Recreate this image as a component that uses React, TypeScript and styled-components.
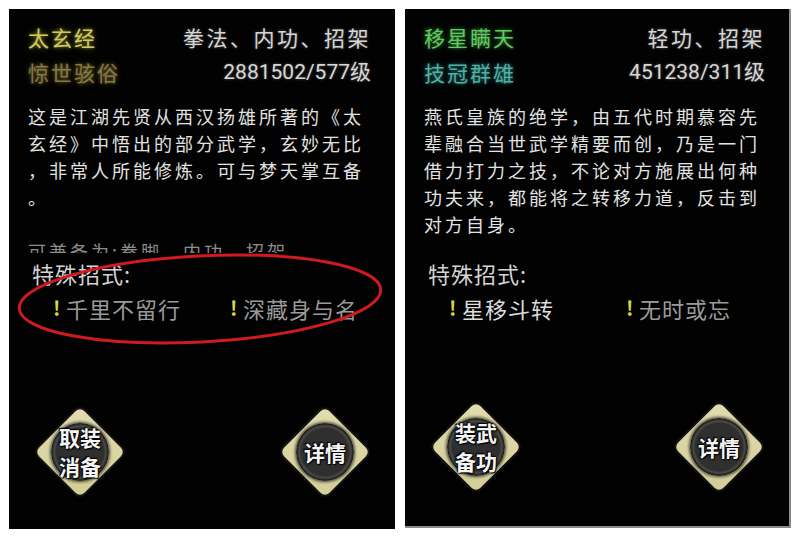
import React from "react";
import styled, { createGlobalStyle } from "styled-components";

const Global = createGlobalStyle`
  html, body { margin: 0; padding: 0; background: #ffffff; }
  body { font-family: "Noto Sans CJK SC", "Noto Sans", sans-serif; }
`;

const Page = styled.div`
  display: flex;
  gap: 10px;
  padding: 9px 0 0 9px;
  width: 800px;
  height: 538px;
  box-sizing: border-box;
`;

const Panel = styled.section<{ $framed?: boolean }>`
  position: relative;
  width: 386px;
  height: ${(p) => (p.$framed ? 519 : 520)}px;
  box-sizing: border-box;
  background: #020202;
  display: flex;
  flex-direction: column;
  padding: 13px 0 0 0;
  border-right: ${(p) => (p.$framed ? "2px solid #8a8a8a" : "none")};
  border-bottom: ${(p) => (p.$framed ? "2px solid #8a8a8a" : "none")};
  overflow: hidden;
`;

const Header = styled.div`
  display: grid;
  grid-template-columns: auto 1fr;
  row-gap: 5px;
  padding: 0 24px 0 19px;
  line-height: 30px;
`;

const Name = styled.div<{ $color: string; $glow: string }>`
  font-size: 21px;
  letter-spacing: 2px;
  color: ${(p) => p.$color};
  text-shadow: 0 0 3px ${(p) => p.$glow}, 0 0 6px ${(p) => p.$glow};
`;

const Meta = styled.div<{ $digits?: boolean }>`
  justify-self: end;
  font-family: ${(p) =>
    p.$digits ? `Roboto, "Noto Sans CJK SC", sans-serif` : `"Noto Sans CJK SC", sans-serif`};
  font-size: 21px;
  letter-spacing: ${(p) => (p.$digits ? 0 : 2.5)}px;
  color: #d6d6d6;
  text-shadow: 0 0 3px rgba(255, 255, 255, 0.35);
`;

const Description = styled.div`
  margin-top: 16px;
  height: 150px;
  overflow: hidden;
  padding-left: 19px;
`;

const Line = styled.div<{ $dim?: boolean }>`
  height: 27px;
  line-height: 27px;
  font-size: 18px;
  letter-spacing: 3px;
  white-space: nowrap;
  color: ${(p) => (p.$dim ? "#8c8c8c" : "#e2e2e2")};
`;

const SpecialTitle = styled.div`
  margin-top: 5px;
  padding-left: 23px;
  line-height: 30px;
  font-size: 22px;
  color: #d4d4d4;
  letter-spacing: 1px;
`;

const Moves = styled.div`
  display: grid;
  grid-template-columns: 177px 1fr;
  padding-left: 44px;
  margin-top: 5px;
  line-height: 30px;
`;

const Move = styled.div<{ $bright?: boolean }>`
  display: flex;
  align-items: center;
  gap: 6px;
  font-size: 22px;
  letter-spacing: 1px;
  color: ${(p) => (p.$bright ? "#dcdcdc" : "#9a9a9a")};
`;

const Bang = styled.span`
  color: #d9d64e;
  font-size: 20px;
  font-weight: 700;
  width: 7px;
`;

const Footer = styled.div<{ $bottom: number }>`
  margin-top: auto;
  display: flex;
  justify-content: space-between;
  padding: 0 24px ${(p) => p.$bottom}px 25px;
`;

const Button = styled.div`
  width: 92px;
  height: 92px;
  display: grid;
  place-items: center;
`;

const Diamond = styled.div`
  grid-area: 1 / 1;
  width: 64px;
  height: 64px;
  border-radius: 6px;
  transform: rotate(45deg);
  background: linear-gradient(135deg, #e2ddb0, #d3cd98);
  box-shadow: 0 0 0 2px #141414, 0 0 4px 3px rgba(0, 0, 0, 0.8);
`;

const Disc = styled.div`
  grid-area: 1 / 1;
  position: relative;
  z-index: 1;
  width: 58px;
  height: 58px;
  border-radius: 50%;
  background: radial-gradient(
    circle,
    #2f2f2f 0 58%,
    #4a4a44 63%,
    #1c1c1c 69%,
    #77776a 75%,
    #2a2a26 82%,
    #55554a 90%,
    #2b2b26 100%
  );
  box-shadow: 0 0 3px 1px rgba(0, 0, 0, 0.7);
  display: flex;
  flex-direction: column;
  align-items: center;
  justify-content: center;
`;

const Label = styled.div`
  font-size: 21px;
  line-height: 29px;
  font-weight: 700;
  color: #f4f4f4;
  white-space: nowrap;
  text-shadow: 0 0 2px #000, 0 0 2px #000, 1px 1px 1px #000, -1px -1px 1px #000;
`;

const Mark = styled.svg`
  position: absolute;
  left: 0;
  top: 0;
  pointer-events: none;
`;

type Skill = {
  name: string;
  nameColor: string;
  nameGlow: string;
  rank: string;
  rankColor: string;
  rankGlow: string;
  kinds: string;
  exp: string;
  lines: { text: string; dim?: boolean }[];
  moves: { name: string; bright?: boolean }[];
  action: string[];
  framed?: boolean;
  bottom: number;
  circled?: boolean;
};

const skills: Skill[] = [
  {
    name: "太玄经",
    nameColor: "#cfca5e",
    nameGlow: "rgba(190,185,70,0.55)",
    rank: "惊世骇俗",
    rankColor: "#837844",
    rankGlow: "rgba(120,105,45,0.7)",
    kinds: "拳法、内功、招架",
    exp: "2881502/577级",
    lines: [
      { text: "这是江湖先贤从西汉扬雄所著的《太" },
      { text: "玄经》中悟出的部分武学，玄妙无比" },
      { text: "，非常人所能修炼。可与梦天掌互备" },
      { text: "。" },
      { text: "" },
      { text: "可兼备为:拳脚、内功、招架", dim: true },
    ],
    moves: [{ name: "千里不留行" }, { name: "深藏身与名" }],
    action: ["取装", "消备"],
    bottom: 31,
    circled: true,
  },
  {
    name: "移星瞒天",
    nameColor: "#62c862",
    nameGlow: "rgba(80,190,80,0.5)",
    rank: "技冠群雄",
    rankColor: "#4fb0a6",
    rankGlow: "rgba(60,160,150,0.5)",
    kinds: "轻功、招架",
    exp: "451238/311级",
    lines: [
      { text: "燕氏皇族的绝学，由五代时期慕容先" },
      { text: "辈融合当世武学精要而创，乃是一门" },
      { text: "借力打力之技，不论对方施展出何种" },
      { text: "功夫来，都能将之转移力道，反击到" },
      { text: "对方自身。" },
    ],
    moves: [{ name: "星移斗转", bright: true }, { name: "无时或忘" }],
    action: ["装武", "备功"],
    framed: true,
    bottom: 33,
  },
];

function SkillPanel({ s }: { s: Skill }) {
  return (
    <Panel $framed={s.framed}>
      <Header>
        <Name $color={s.nameColor} $glow={s.nameGlow}>{s.name}</Name>
        <Meta>{s.kinds}</Meta>
        <Name $color={s.rankColor} $glow={s.rankGlow}>{s.rank}</Name>
        <Meta $digits>{s.exp}</Meta>
      </Header>
      <Description>
        {s.lines.map((l, i) => (
          <Line key={i} $dim={l.dim}>{l.text || "\u00a0"}</Line>
        ))}
      </Description>
      <SpecialTitle>特殊招式:</SpecialTitle>
      <Moves>
        {s.moves.map((m) => (
          <Move key={m.name} $bright={m.bright}>
            <Bang>!</Bang>
            {m.name}
          </Move>
        ))}
      </Moves>
      <Footer $bottom={s.bottom}>
        <Button>
          <Diamond />
          <Disc>
            {s.action.map((t) => (
              <Label key={t}>{t}</Label>
            ))}
          </Disc>
        </Button>
        <Button>
          <Diamond />
          <Disc>
            <Label>详情</Label>
          </Disc>
        </Button>
      </Footer>
      {s.circled && (
        <Mark width="386" height="520" viewBox="0 0 386 520">
          <ellipse
            cx="191"
            cy="290"
            rx="181"
            ry="43"
            fill="none"
            stroke="#cf1a1f"
            strokeWidth="3"
            transform="rotate(-3 191 290)"
          />
        </Mark>
      )}
    </Panel>
  );
}

export default function App() {
  return (
    <>
      <Global />
      <Page>
        {skills.map((s) => (
          <SkillPanel key={s.name} s={s} />
        ))}
      </Page>
    </>
  );
}
